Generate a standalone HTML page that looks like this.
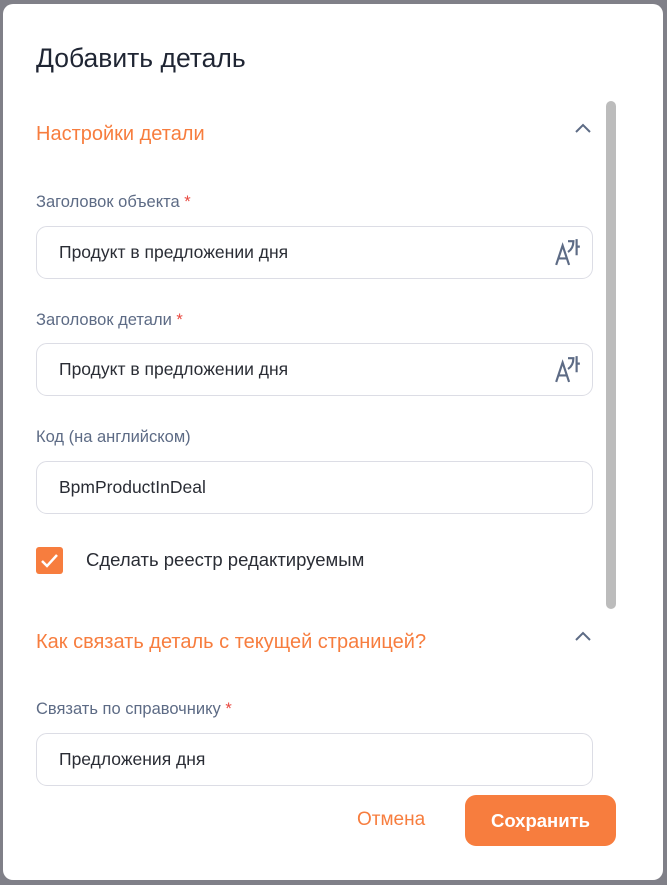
<!DOCTYPE html>
<html><head><meta charset="utf-8"><style>
*{box-sizing:border-box;margin:0;padding:0}
body{width:667px;height:885px;background:#808088;font-family:"Liberation Sans",sans-serif;position:relative;overflow:hidden}
.dlg{position:absolute;left:3px;top:4px;width:660px;height:876px;background:#fff;border-radius:10px;overflow:hidden}
.a{position:absolute;white-space:nowrap}
.t{left:33px;top:39px;font-size:26.5px;color:#1f2533}
.h{left:33px;font-size:20px;color:#f77d3e}
.l{left:33px;font-size:16.5px;color:#5d6b85}
.l b{color:#e8483f;font-weight:normal}
.in{position:absolute;left:33px;width:557px;height:53px;border:1px solid #dcdde5;border-radius:11px;font-size:17.5px;color:#2a2d35;padding-left:22px;line-height:51px}
.chev{position:absolute;left:571px;width:18px;height:12px}
</style></head><body>
<div class="dlg">
<div class="a t">Добавить деталь</div>
<div style="position:absolute;left:603px;top:97px;width:10px;height:508px;background:#bcbcbc;border-radius:5px"></div>
<div class="a h" style="top:119px">Настройки детали</div>
<svg class="chev" style="top:118px" viewBox="0 0 18 12"><path d="M2 10L9 3L16 10" fill="none" stroke="#5d6b85" stroke-width="2"/></svg>
<div class="a l" style="top:189px">Заголовок объекта <b>*</b></div>
<div class="in" style="top:222px">Продукт в предложении дня
<svg style="position:absolute;right:10px;top:11px" width="28" height="28" viewBox="0 0 26 26"><path d="M2 25L8 7L14 25M4.5 19H11.5" fill="none" stroke="#5d6b85" stroke-width="2"/><path d="M13 3H18C18 8 16 11 13 13M21 1V16M21 8H24" fill="none" stroke="#5d6b85" stroke-width="2"/></svg></div>
<div class="a l" style="top:307px">Заголовок детали <b>*</b></div>
<div class="in" style="top:339px">Продукт в предложении дня
<svg style="position:absolute;right:10px;top:11px" width="28" height="28" viewBox="0 0 26 26"><path d="M2 25L8 7L14 25M4.5 19H11.5" fill="none" stroke="#5d6b85" stroke-width="2"/><path d="M13 3H18C18 8 16 11 13 13M21 1V16M21 8H24" fill="none" stroke="#5d6b85" stroke-width="2"/></svg></div>
<div class="a l" style="top:424px">Код (на английском)</div>
<div class="in" style="top:457px">BpmProductInDeal</div>
<div style="position:absolute;left:33px;top:543px;width:27px;height:27px;background:#f77d3e;border-radius:3px"><svg width="27" height="27" viewBox="0 0 27 27"><path d="M6 14L11 19L21 8" fill="none" stroke="#fff" stroke-width="2.5"/></svg></div>
<div class="a" style="left:83px;top:545px;font-size:18.5px;color:#2a2d35">Сделать реестр редактируемым</div>
<div class="a h" style="top:627px">Как связать деталь с текущей страницей?</div>
<svg class="chev" style="top:626px" viewBox="0 0 18 12"><path d="M2 10L9 3L16 10" fill="none" stroke="#5d6b85" stroke-width="2"/></svg>
<div class="a l" style="top:696px">Связать по справочнику <b>*</b></div>
<div class="in" style="top:729px">Предложения дня</div>
<div class="a" style="left:354px;top:805px;font-size:19px;color:#f77d3e">Отмена</div>
<div style="position:absolute;left:462px;top:791px;width:151px;height:51px;background:#f77d3e;border-radius:11px;color:#fff;font-size:18.5px;font-weight:bold;text-align:center;line-height:51px">Сохранить</div>
</div>
</body></html>
